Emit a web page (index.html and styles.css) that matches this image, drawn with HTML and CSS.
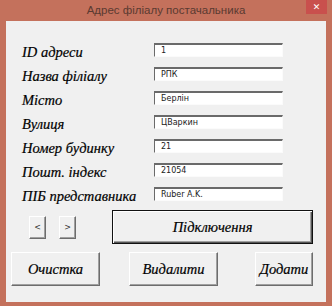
FILE: index.html
```html
<!DOCTYPE html>
<html lang="uk">
<head>
  <meta charset="UTF-8" />
  <title>Адрес філіалу постачальника</title>
  <link rel="stylesheet" href="styles.css">
</head>
<body>
<div class="window">
  <div class="titlebar">
    <span></span>
    <span class="title">Адрес філіалу постачальника</span>
    <span class="close">✕</span>
  </div>

  <div class="client">
    <div class="form">
      <label>ID адреси</label>         <input type="text" value="1" />
      <label>Назва філіалу</label>     <input type="text" value="РПК" />
      <label>Місто</label>             <input type="text" value="Берлін" />
      <label>Вулиця</label>            <input type="text" value="ЦВаркин" />
      <label>Номер будинку</label>     <input type="text" value="21" />
      <label>Пошт. індекс</label>      <input type="text" value="21054" />
      <label>ПІБ представника</label>  <input type="text" value="Ruber A.K." />
    </div>

    <div class="row nav-row">
      <button class="btn small">&lt;</button>
      <button class="btn small">&gt;</button>
      <button class="btn default connect">Підключення</button>
    </div>

    <div class="row action-row">
      <button class="btn action clear">Очистка</button>
      <button class="btn action delete">Видалити</button>
      <button class="btn action add">Додати</button>
    </div>
  </div>
</div>
</body>
</html>
```
FILE: styles.css
```css
:root {
  --frame: #c4715c;
  --client: #f0f0f0;
  --dark: #6d6d6d;
  --mid: #a0a0a0;
}

* { box-sizing: border-box; margin: 0; padding: 0; }

html, body { height: 100%; }

body {
  background: var(--frame);
  font-family: 'Liberation Serif', serif;
}

.window {
  height: 100vh;
  display: flex;
  flex-direction: column;
}

.titlebar {
  height: 21px;
  display: grid;
  grid-template-columns: 1fr auto 1fr;
  align-items: start;
}

.title {
  font-family: 'Liberation Sans', sans-serif;
  font-size: 11.5px;
  color: #5a3a31;
  line-height: 21px;
}

.close {
  justify-self: end;
  width: 21px;
  height: 14px;
  margin-right: 5px;
  background: #c9504d;
  color: #fff;
  font-family: 'DejaVu Sans', sans-serif;
  font-size: 9px;
  font-weight: bold;
  line-height: 14px;
  text-align: center;
}

.client {
  flex: 1;
  margin: 0 6px 4px;
  background: var(--client);
  padding-top: 22px;
}

.form {
  display: grid;
  grid-template-columns: 132px 129px;
  grid-auto-rows: 14px;
  row-gap: 10px;
  align-items: center;
  padding-left: 16px;
}

.form label {
  font-style: italic;
  font-size: 14.5px;
  line-height: 14px;
  color: #000;
  padding-top: 3px;
  white-space: nowrap;
  -webkit-text-stroke: 0.2px #000;
}

.form input {
  height: 14px;
  width: 129px;
  background: #fff;
  border: 1px solid;
  border-top-width: 2px;
  border-color: #6a6a6a #fbfbfb #fbfbfb #6a6a6a;
  font-family: 'DejaVu Sans', sans-serif;
  font-size: 8px;
  color: #222;
  padding: 0 0 0 6px;
  outline: none;
}

.row {
  display: flex;
  align-items: center;
}

.nav-row {
  margin-top: 9px;
  padding-left: 23px;
}

.action-row {
  margin-top: 8px;
  padding-left: 5px;
}

.btn {
  background: var(--client);
  border: 1px solid;
  border-color: #fff var(--dark) var(--dark) #fff;
  box-shadow: inset -1px -1px 0 var(--mid);
  font-family: 'Liberation Serif', serif;
  font-style: italic;
  font-size: 14.5px;
  color: #000;
  -webkit-text-stroke: 0.2px #000;
}

.small {
  width: 17px;
  height: 23px;
  font-family: 'DejaVu Sans', sans-serif;
  font-style: normal;
  font-size: 8px;
  color: #333;
  -webkit-text-stroke: 0;
  margin-right: 13px;
}

.connect {
  margin-left: 23px;
  width: 201px;
  height: 34px;
  border: 1px solid #111;
  box-shadow: inset 1px 1px 0 #fff, inset -1px -1px 0 #555, inset -2px -2px 0 var(--mid);
}

.action { height: 34px; }

.clear  { width: 89px; }
.delete { width: 89px; margin-left: 29px; }
.add    { width: 58px; margin-left: 37px; }
```
